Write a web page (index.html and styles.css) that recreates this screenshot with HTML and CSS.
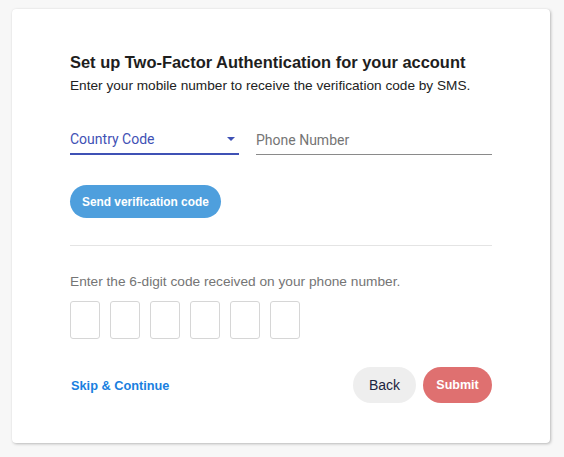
FILE: index.html
```html
<!DOCTYPE html>
<html>
<head>
<meta charset="utf-8">
<link rel="stylesheet" href="styles.css">
</head>
<body>
<div class="card">
  <h1 class="title">Set up Two-Factor Authentication for your account</h1>
  <p class="subtitle">Enter your mobile number to receive the verification code by SMS.</p>
  <div class="fields">
    <div class="field country">
      <span>Country Code</span>
      <svg class="caret" width="8" height="4" viewBox="0 0 8 4"><path d="M0 0 L8 0 L4 4 Z" fill="#3f51b5"/></svg>
    </div>
    <div class="field phone"><span>Phone Number</span></div>
  </div>
  <button class="send">Send verification code</button>
  <hr class="divider">
  <p class="hint">Enter the 6-digit code received on your phone number.</p>
  <div class="code">
    <div class="box"></div><div class="box"></div><div class="box"></div><div class="box"></div><div class="box"></div><div class="box"></div>
  </div>
  <div class="footer">
    <a class="skip">Skip &amp; Continue</a>
    <div class="actions">
      <button class="back">Back</button>
      <button class="submit">Submit</button>
    </div>
  </div>
</div>
</body>
</html>
```
FILE: styles.css
```css
html, body { margin: 0; padding: 0; }
body {
  background: #f7f7f7;
  font-family: "Liberation Sans", Arial, sans-serif;
  width: 564px;
  height: 457px;
  padding: 9px 0 0 12px;
  box-sizing: border-box;
}
.card {
  width: 538px;
  height: 434px;
  background: #fff;
  border-radius: 4px;
  box-shadow: 1px 1px 3px rgba(0,0,0,0.25), 0 0 1px rgba(0,0,0,0.08);
  box-sizing: border-box;
  padding: 43px 58px 0 58px;
}
.title {
  margin: 0;
  font-size: 16.45px;
  font-weight: bold;
  color: #1e1e1e;
  line-height: 20px;
}
.subtitle {
  margin: 6px 0 0 0;
  font-size: 13.65px;
  color: #222;
  line-height: 16px;
}
.fields {
  display: flex;
  gap: 17px;
  margin-top: 33px;
}
.field {
  font-family: Roboto, sans-serif;
  font-size: 14px;
  height: 28px;
  box-sizing: border-box;
  display: flex;
  align-items: center;
  justify-content: space-between;
  padding-bottom: 2px;
}
.country {
  width: 169px;
  color: #3f51b5;
  border-bottom: 2px solid #3f51b5;
}
.caret { margin-right: 4px; }
.phone {
  flex: 1;
  color: #757575;
  border-bottom: 1px solid #8a8a8a;
}
.send {
  margin-top: 30px;
  height: 33px;
  padding: 0 12px;
  border: none;
  border-radius: 17px;
  background: #4e9fdd;
  color: #fff;
  font-family: "Liberation Sans", Arial, sans-serif;
  font-weight: bold;
  font-size: 11.9px;
  display: block;
}
.divider {
  margin: 27px 0 0 0;
  border: none;
  border-top: 1px solid #e4e4e4;
}
.hint {
  margin: 28px 0 0 0;
  font-size: 13.7px;
  color: #757575;
  line-height: 16px;
}
.code {
  display: flex;
  gap: 10px;
  margin-top: 11px;
}
.box {
  width: 30px;
  height: 38px;
  border: 1px solid #d6d6d6;
  border-radius: 3px;
  box-sizing: border-box;
}
.footer {
  display: flex;
  justify-content: space-between;
  align-items: center;
  margin-top: 28px;
}
.skip {
  font-size: 12.75px;
  font-weight: bold;
  color: #1a7fe0;
  margin-left: 1px;
}
.actions {
  display: flex;
  gap: 7px;
}
.actions button {
  height: 36px;
  border: none;
  border-radius: 18px;
  font-family: "Liberation Sans", Arial, sans-serif;
}
.back {
  width: 63px;
  background: #eeeeee;
  color: #1c2440;
  font-size: 14px;
}
.submit {
  width: 69px;
  background: #df7070;
  color: #fff;
  font-weight: bold;
  font-size: 12.5px;
}
```
